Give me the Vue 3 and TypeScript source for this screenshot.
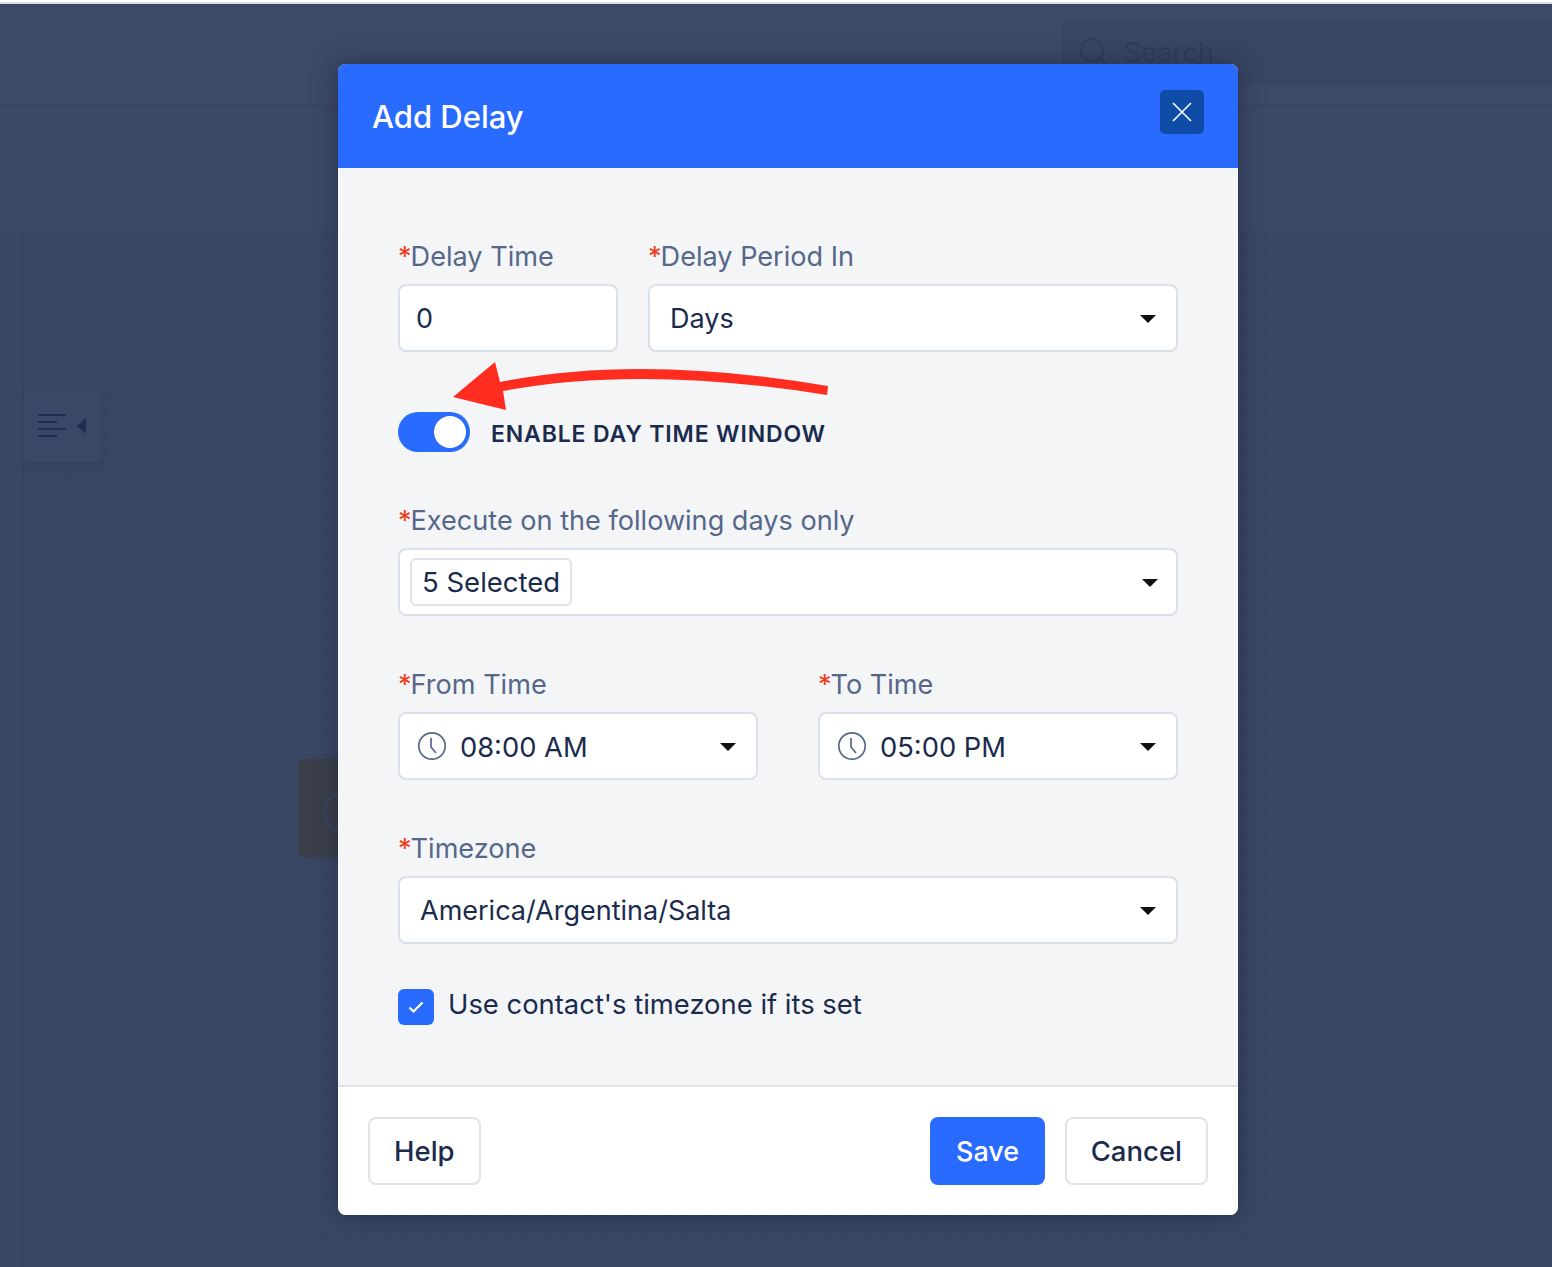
<script setup lang="ts">
import { ref } from 'vue';

const delay_time = ref('0');
const day_window = ref(true);
const use_contact_tz = ref(true);

const time_fields = [
    { label: 'From Time', value: '08:00 AM' },
    { label: 'To Time', value: '05:00 PM' },
];
</script>

<template>
    <div class="page">
        <header class="topbar">
            <div class="search">
                <svg class="search-icon" width="30" height="30" viewBox="0 0 30 30" fill="none">
                    <circle cx="13" cy="13" r="11" stroke="currentColor" stroke-width="2" />
                    <path d="M21 21l8 8" stroke="currentColor" stroke-width="2" />
                </svg>
                <span>Search</span>
            </div>
        </header>
        <div class="subbar"></div>
        <div class="workspace">
            <div class="rail"></div>
            <div class="canvas">
                <div class="panel-toggle">
                    <span class="lines"><i></i><i class="short"></i><i></i><i class="short"></i></span>
                    <span class="panel-caret"></span>
                </div>
                <div class="node">
                    <span class="node-ring"></span>
                </div>
            </div>
        </div>

        <div class="overlay">
            <div class="modal-dialog">
                <div class="modal-header">
                    <span class="modal-title">Add Delay</span>
                    <button class="modal-close" type="button">
                        <svg width="20" height="20" viewBox="0 0 20 20" fill="none">
                            <path d="M1 1l18 18M19 1L1 19" stroke="#fff" stroke-width="1.6" />
                        </svg>
                    </button>
                </div>

                <div class="modal-body">
                    <svg class="arrow" width="400" height="60" viewBox="450 358 400 60">
                        <path
                            d="M453 397 L495 362 L500 382 Q640 354 828 386 L827 395 Q640 365 503 391 L506 410 Z"
                            fill="#ff2d1f"
                        />
                    </svg>

                    <div class="row">
                        <div class="field delay">
                            <label class="label"><em>*</em>Delay Time</label>
                            <input v-model="delay_time" class="control" type="text" />
                        </div>
                        <div class="field grow">
                            <label class="label"><em>*</em>Delay Period In</label>
                            <div class="control select">
                                <span>Days</span>
                                <span class="caret"></span>
                            </div>
                        </div>
                    </div>

                    <div class="switch-row">
                        <button class="switch" :class="{ on: day_window }" type="button" @click="day_window = !day_window">
                            <span class="knob"></span>
                        </button>
                        <span class="switch-label">ENABLE DAY TIME WINDOW</span>
                    </div>

                    <div class="field spaced">
                        <label class="label"><em>*</em>Execute on the following days only</label>
                        <div class="control select chips">
                            <span class="chip">5 Selected</span>
                            <span class="caret"></span>
                        </div>
                    </div>

                    <div class="row times spaced">
                        <div v-for="t in time_fields" :key="t.label" class="field grow">
                            <label class="label"><em>*</em>{{ t.label }}</label>
                            <div class="control select">
                                <span class="time-value">
                                    <svg width="30" height="30" viewBox="0 0 30 30" fill="none">
                                        <circle cx="15" cy="15" r="13.2" stroke="#56678a" stroke-width="1.7" />
                                        <path d="M14 7v9l5 6" stroke="#56678a" stroke-width="1.7" />
                                    </svg>
                                    <span class="time-text">{{ t.value }}</span>
                                </span>
                                <span class="caret"></span>
                            </div>
                        </div>
                    </div>

                    <div class="field spaced">
                        <label class="label"><em>*</em>Timezone</label>
                        <div class="control select">
                            <span>America/Argentina/Salta</span>
                            <span class="caret"></span>
                        </div>
                    </div>

                    <div class="check-row" @click="use_contact_tz = !use_contact_tz">
                        <span class="check">
                            <svg v-if="use_contact_tz" width="16" height="12" viewBox="0 0 16 12" fill="none">
                                <path d="M1.5 6.5l4 4 9-9" stroke="#fff" stroke-width="2.2" />
                            </svg>
                        </span>
                        <span class="check-text">Use contact's timezone if its set</span>
                    </div>
                </div>

                <div class="modal-footer">
                    <button class="btn" type="button">Help</button>
                    <div class="footer-right">
                        <button class="btn primary" type="button">Save</button>
                        <button class="btn" type="button">Cancel</button>
                    </div>
                </div>
            </div>
        </div>
    </div>
</template>

<style>
body {
    margin: 0;
    background: #3a4865;
}
</style>

<style scoped>
.page {
    position: relative;
    height: 1267px;
    overflow: hidden;
    display: flex;
    flex-direction: column;
    background: #3a4865;
    font-family: Inter, "Liberation Sans", sans-serif;
    color: #1a2b4d;
}
.topbar {
    height: 106px;
    flex: none;
    box-sizing: border-box;
    border-top: 2px solid #fff;
    border-bottom: 2px solid #384663;
    background: #3c4a67;
    box-shadow: inset 0 2px 0 #dfe0e1;
    display: flex;
    justify-content: flex-end;
    padding-top: 18px;
}
.search {
    width: 490px;
    height: 66px;
    box-sizing: border-box;
    border-radius: 8px 0 0 8px;
    background: #384663;
    display: flex;
    align-items: center;
    gap: 15px;
    padding: 0 0 2px 17px;
    font-size: 27px;
    color: #2f3d5a;
}
.search-icon {
    flex: none;
}
.subbar {
    height: 127px;
    flex: none;
    box-sizing: border-box;
    background: #3b4966;
    border-bottom: 2px solid #384663;
}
.workspace {
    flex: 1;
    display: flex;
}
.rail {
    width: 22px;
    flex: none;
    border-right: 2px solid #364361;
    background: #394764;
}
.canvas {
    position: relative;
    flex: 1;
    background-color: #394764;
    background-image: radial-gradient(circle, #323f5c 1px, transparent 1.3px);
    background-size: 20px 20px;
    background-position: -8.5px -8px;
}
.panel-toggle {
    position: absolute;
    left: 0;
    top: 156px;
    width: 76px;
    height: 73px;
    display: flex;
    align-items: center;
    gap: 11px;
    padding-left: 14px;
    box-sizing: border-box;
    background: #3a4865;
    border-radius: 0 4px 4px 0;
    box-shadow: 4px 6px 10px rgba(40, 52, 80, 0.25);
}
.lines {
    display: flex;
    flex-direction: column;
    gap: 5px;
    width: 28px;
}
.lines i {
    display: block;
    height: 2px;
    background: #1f2e50;
}
.lines i.short {
    width: 19px;
}
.panel-caret {
    width: 0;
    height: 0;
    border-top: 8px solid transparent;
    border-bottom: 8px solid transparent;
    border-right: 9px solid #1f2e50;
}
.node {
    position: absolute;
    left: 274px;
    top: 526px;
    width: 100px;
    height: 98px;
    border-radius: 4px;
    background: #3a3f4a;
}
.node-ring {
    position: absolute;
    left: 25px;
    top: 32px;
    width: 37px;
    height: 37px;
    border: 3px solid #384663;
    border-radius: 50%;
}
.overlay {
    position: absolute;
    inset: 0;
    padding: 64px 314px 0 338px;
}
.modal-dialog {
    position: relative;
    width: 900px;
    border-radius: 8px;
    overflow: hidden;
    background: #f4f5f7;
    box-shadow: 0 0 24px rgba(25, 30, 50, 0.55);
}
.modal-header {
    height: 104px;
    box-sizing: border-box;
    display: flex;
    align-items: center;
    justify-content: space-between;
    padding: 0 34px;
    background: #2a6bff;
}
.modal-title {
    font-size: 31px;
    font-weight: 500;
    color: #fff;
}
.modal-close {
    width: 44px;
    height: 44px;
    margin-top: -8px;
    padding: 0;
    display: flex;
    align-items: center;
    justify-content: center;
    border: none;
    border-radius: 5px;
    background: #0f4ca8;
}
.modal-body {
    position: relative;
    padding: 72px 60px 60px;
}
.arrow {
    position: absolute;
    left: 112px;
    top: 190px;
}
.row {
    display: flex;
    gap: 30px;
}
.row.times {
    gap: 60px;
}
.field {
    display: flex;
    flex-direction: column;
}
.field.delay {
    width: 220px;
    flex: none;
}
.field.grow {
    flex: 1;
    min-width: 0;
}
.spaced {
    margin-top: 52px;
}
.label {
    height: 32px;
    margin-bottom: 12px;
    padding-top: 1px;
    box-sizing: border-box;
    font-size: 27.1px;
    line-height: 32px;
    color: #56678a;
}
.label em {
    margin-right: -1px;
    font-style: normal;
    color: #f03a17;
}
.control {
    box-sizing: border-box;
    width: 100%;
    height: 68px;
    padding: 1px 20px 0 16px;
    border: 2px solid #dae1ea;
    border-radius: 8px;
    background: #fff;
    font-family: inherit;
    font-size: 27px;
    color: #1a2b4d;
    outline: none;
}
.select {
    display: flex;
    align-items: center;
    justify-content: space-between;
    padding-left: 20px;
}
.chips {
    padding-left: 10px;
    font-size: 27.5px;
}
.chips .caret {
    margin-right: -2px;
}
.chip {
    box-sizing: border-box;
    height: 48px;
    line-height: 44px;
    margin-top: -1px;
    padding: 0 10px;
    border: 2px solid #dfe2e9;
    border-radius: 6px;
}
.caret {
    width: 0;
    height: 0;
    border-left: 8px solid transparent;
    border-right: 8px solid transparent;
    border-top: 8px solid #111;
}
.time-value {
    display: flex;
    align-items: center;
    gap: 13px;
    margin-left: -3px;
}
.time-value svg {
    margin-top: -1px;
}
.time-text {
    margin-top: 2px;
    font-size: 27.3px;
}
.switch-row {
    display: flex;
    align-items: center;
    gap: 21px;
    margin-top: 60px;
}
.switch {
    position: relative;
    width: 72px;
    height: 40px;
    padding: 0;
    border: none;
    border-radius: 20px;
    background: #c3cad6;
}
.switch.on {
    background: #2a6bff;
}
.knob {
    position: absolute;
    top: 4px;
    left: 4px;
    width: 32px;
    height: 32px;
    border-radius: 50%;
    background: #fff;
}
.switch.on .knob {
    left: 36px;
}
.switch-label {
    margin-top: 4px;
    font-size: 23px;
    font-weight: 600;
    letter-spacing: 0.86px;
}
.check-row {
    display: flex;
    align-items: center;
    gap: 14px;
    margin-top: 45px;
    font-size: 27.4px;
}
.check-text {
    margin-top: -6px;
}
.check {
    width: 36px;
    height: 36px;
    display: flex;
    align-items: center;
    justify-content: center;
    border-radius: 6px;
    background: #2a6bff;
}
.modal-footer {
    height: 130px;
    box-sizing: border-box;
    display: flex;
    align-items: flex-start;
    justify-content: space-between;
    padding: 30px 30px 0;
    border-top: 2px solid #e2e3e8;
    background: #fff;
}
.footer-right {
    display: flex;
    gap: 20px;
}
.btn {
    height: 68px;
    padding: 0 24px;
    border: 2px solid #e2e3e8;
    border-radius: 8px;
    background: #fff;
    font-family: inherit;
    font-size: 27.5px;
    font-weight: 500;
    color: #1a2b4d;
}
.btn.primary {
    padding: 0 23.5px;
    border-color: #2a6bff;
    background: #2a6bff;
    font-size: 27px;
    color: #fff;
}
</style>
